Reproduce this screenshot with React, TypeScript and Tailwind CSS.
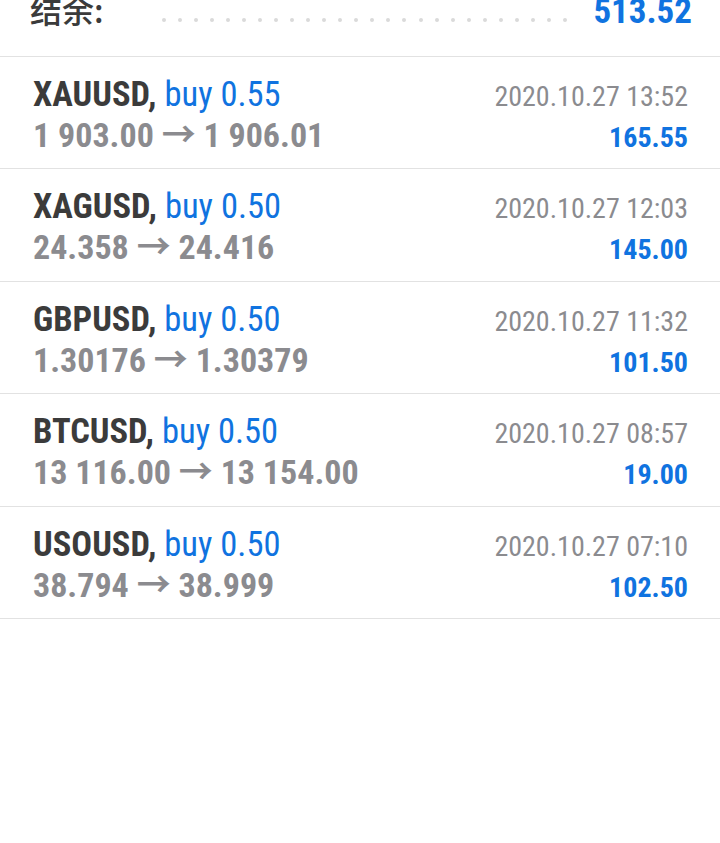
import React from 'react';

const deals = [
  { symbol: 'XAUUSD', volume: '0.55', open: '1 903.00', close: '1 906.01', time: '2020.10.27 13:52', profit: '165.55' },
  { symbol: 'XAGUSD', volume: '0.50', open: '24.358', close: '24.416', time: '2020.10.27 12:03', profit: '145.00' },
  { symbol: 'GBPUSD', volume: '0.50', open: '1.30176', close: '1.30379', time: '2020.10.27 11:32', profit: '101.50' },
  { symbol: 'BTCUSD', volume: '0.50', open: '13 116.00', close: '13 154.00', time: '2020.10.27 08:57', profit: '19.00' },
  { symbol: 'USOUSD', volume: '0.50', open: '38.794', close: '38.999', time: '2020.10.27 07:10', profit: '102.50' },
];

const font = { fontFamily: '"Roboto Condensed", Roboto, "Noto Sans CJK SC", sans-serif' };

const App = () => {
  return (
    <div className="w-[720px] min-h-[843px] bg-white overflow-hidden" style={font}>
      {/* balance row, scrolled partly off the top */}
      <div className="h-[57px] flex flex-col border-b border-[#e2e2e2] pl-[30px] pr-[28px]">
        <div className="flex items-baseline justify-between -mt-[9px] leading-[36px]">
          <span className="text-[32px] font-medium text-[#3b3b3b]" style={{ fontFamily: '"Noto Sans CJK SC", sans-serif' }}>
            结余:
          </span>
          <span className="flex-1 flex justify-between ml-[58px] mr-[26px] self-start mt-[27px]">
            {Array.from({ length: 26 }).map((_, i) => (
              <span key={i} className="w-[4px] h-[4px] rounded-full bg-[#dadada]"></span>
            ))}
          </span>
          <span className="text-[35px] font-bold text-[#1073e0]">513.52</span>
        </div>
      </div>
      {deals.map((d) => (
        <div key={d.symbol} className="h-[112.4px] border-b border-[#e2e2e2] pl-[33px] pr-[32px] pt-[18px]">
          <div className="flex justify-between items-baseline leading-[38px]">
            <div className="text-[34.5px]">
              <span className="font-bold text-[#3b3b3b]">{d.symbol},</span>{' '}
              <span className="text-[#1073e0]">buy {d.volume}</span>
            </div>
            <div className="text-[28px] text-[#8b8b8f]">{d.time}</div>
          </div>
          <div className="flex justify-between items-baseline leading-[38px]">
            <div className="text-[34px] font-bold text-[#8b8b8f]">
              {d.open} → {d.close}
            </div>
            <div className="text-[28px] font-bold text-[#1073e0]">{d.profit}</div>
          </div>
        </div>
      ))}
    </div>
  );
};

export default App;
